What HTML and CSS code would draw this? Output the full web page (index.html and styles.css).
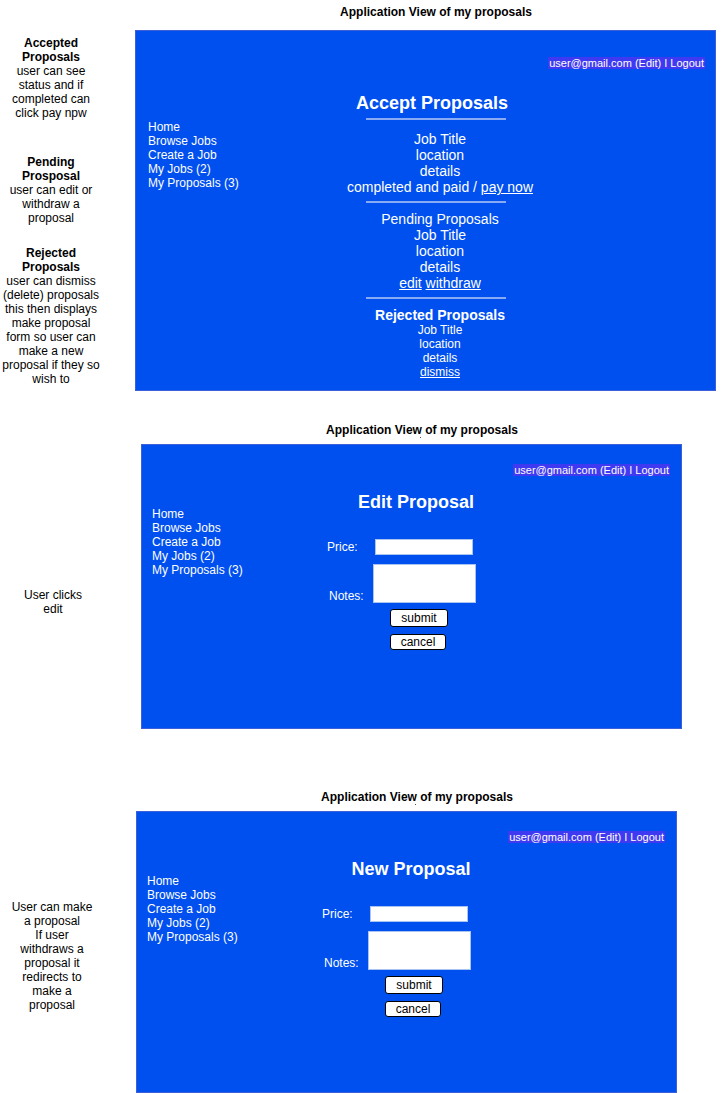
FILE: index.html
```html
<!DOCTYPE html>
<html lang="en">
<head>
<meta charset="utf-8">
<title>Application View of my proposals</title>
<link rel="stylesheet" href="styles.css">
</head>
<body>
<div class="canvas">

  <div class="title title-1">Application View of my proposals</div>
  <div class="title title-2">Application View of my proposals</div>
  <span class="dot dot-2"></span>
  <div class="title title-3">Application View of my proposals</div>
  <span class="dot dot-3"></span>

  <div class="note note-1"><b>Accepted<br>Proposals</b><br>user can see<br>status and if<br>completed can<br>click pay npw</div>
  <div class="note note-2"><b>Pending<br>Prosposal</b><br>user can edit or<br>withdraw a<br>proposal</div>
  <div class="note note-3"><b>Rejected<br>Proposals</b><br>user can dismiss<br>(delete) proposals<br>this then displays<br>make proposal<br>form so user can<br>make a new<br>proposal if they so<br>wish to</div>
  <div class="note note-4">User clicks<br>edit</div>
  <div class="note note-5">User can make<br>a proposal<br>If user<br>withdraws a<br>proposal it<br>redirects to<br>make a<br>proposal</div>

  <section class="panel panel-1">
    <div class="topbar"><span class="email">user@gmail.com (Edit) I Logout</span></div>
    <div class="body">
      <nav class="nav">
        <span>Home</span><span>Browse Jobs</span><span>Create a Job</span><span>My Jobs (2)</span><span>My Proposals (3)</span>
      </nav>
      <div class="main list">
        <h1 class="heading">Accept Proposals</h1>
        <hr class="sep sep-1">
        <div class="block block-a">
          <span>Job Title</span><span>location</span><span>details</span>
          <span>completed and paid / <a href="#">pay now</a></span>
        </div>
        <hr class="sep sep-2">
        <div class="block block-b">
          <span>Pending Proposals</span><span>Job Title</span><span>location</span><span>details</span>
          <span><a href="#">edit</a> <a href="#">withdraw</a></span>
        </div>
        <hr class="sep sep-3">
        <h2 class="subheading">Rejected Proposals</h2>
        <div class="block block-c">
          <span>Job Title</span><span>location</span><span>details</span><span><a href="#">dismiss</a></span>
        </div>
      </div>
    </div>
  </section>

  <section class="panel panel-form panel-2">
    <div class="topbar"><span class="email">user@gmail.com (Edit) I Logout</span></div>
    <div class="body">
      <nav class="nav">
        <span>Home</span><span>Browse Jobs</span><span>Create a Job</span><span>My Jobs (2)</span><span>My Proposals (3)</span>
      </nav>
      <div class="main form">
        <h1 class="heading form-title">Edit Proposal</h1>
        <div class="row row-price"><label class="lbl lbl-price">Price:</label><span class="input"></span></div>
        <div class="row row-notes"><label class="lbl lbl-notes">Notes:</label><span class="textarea"></span></div>
        <button class="btn btn-submit" type="button">submit</button>
        <button class="btn btn-cancel" type="button">cancel</button>
      </div>
    </div>
  </section>

  <section class="panel panel-form panel-3">
    <div class="topbar"><span class="email">user@gmail.com (Edit) I Logout</span></div>
    <div class="body">
      <nav class="nav">
        <span>Home</span><span>Browse Jobs</span><span>Create a Job</span><span>My Jobs (2)</span><span>My Proposals (3)</span>
      </nav>
      <div class="main form">
        <h1 class="heading form-title">New Proposal</h1>
        <div class="row row-price"><label class="lbl lbl-price">Price:</label><span class="input"></span></div>
        <div class="row row-notes"><label class="lbl lbl-notes">Notes:</label><span class="textarea"></span></div>
        <button class="btn btn-submit" type="button">submit</button>
        <button class="btn btn-cancel" type="button">cancel</button>
      </div>
    </div>
  </section>

</div>
</body>
</html>
```

FILE: styles.css
```css
html, body {
  margin: 0;
  padding: 0;
  background: #ffffff;
}

.canvas {
  position: relative;
  width: 726px;
  height: 1093px;
  overflow: hidden;
  background: #ffffff;
  font-family: "Liberation Sans", Arial, Helvetica, sans-serif;
  color: #000000;
}

/* ---------- diagram titles ---------- */
.title {
  position: absolute;
  width: 200px;
  text-align: center;
  font-size: 12px;
  line-height: 14px;
  font-weight: bold;
  white-space: nowrap;
}
.title-1 { left: 336px; top: 5px; }
.title-2 { left: 322px; top: 423px; }
.title-3 { left: 317px; top: 790px; }

.dot {
  position: absolute;
  width: 1px;
  height: 1px;
  background: #555555;
}
.dot-2 { left: 420px; top: 437px; }
.dot-3 { left: 415px; top: 804px; }

/* ---------- annotations ---------- */
.note {
  position: absolute;
  left: 0;
  width: 102px;
  text-align: center;
  font-size: 12px;
  line-height: 14px;
  white-space: nowrap;
}
.note-1 { top: 36px; }
.note-2 { top: 155px; }
.note-3 { top: 246px; }
.note-4 { top: 588px; left: 1px; width: 104px; }
.note-5 { top: 900px; left: 1px; width: 102px; }

/* ---------- app panels ---------- */
.panel {
  position: absolute;
  box-sizing: border-box;
  border: 1px solid #3d60d8;
  background: #0050ef;
  color: #ffffff;
  display: flex;
  flex-direction: column;
}
.panel-1 { left: 135px; top: 30px; width: 581px; height: 361px; }
.panel-2 { left: 141px; top: 444px; width: 541px; height: 285px; }
.panel-3 { left: 136px; top: 811px; width: 541px; height: 282px; }

.topbar {
  display: flex;
  justify-content: flex-end;
}
.panel-1 .topbar { padding: 26px 10px 0 0; }
.panel-form .topbar { padding: 19px 11px 0 0; }

.email {
  display: block;
  padding: 0 1px;
  font-size: 11px;
  line-height: 12px;
  background: #3f3af2;
  color: #ffffff;
  white-space: nowrap;
}

.body {
  display: grid;
}
.body > .nav,
.body > .main {
  grid-area: 1 / 1;
  justify-self: start;
  align-self: start;
}

.nav {
  display: flex;
  flex-direction: column;
  font-size: 12px;
  line-height: 14px;
  white-space: nowrap;
}
.panel-1 .nav { margin: 51px 0 0 12px; }
.panel-form .nav { margin: 31px 0 0 10px; }

.main {
  display: flex;
  flex-direction: column;
}

.heading {
  margin: 0;
  font-size: 18px;
  line-height: 22px;
  font-weight: bold;
  white-space: nowrap;
}

/* ---------- list panel ---------- */
.list {
  width: 240px;
  margin: 23px 0 0 184px;
  text-align: center;
}
.list .heading {
  padding-right: 16px;
}

.sep {
  width: 140px;
  height: 2px;
  border: 0;
  margin: 0 0 0 46px;
  padding: 0;
  background: #8aaaf6;
}
.sep-1 { margin-top: 4px; }
.sep-2 { margin-top: 6px; }
.sep-3 { margin-top: 6px; }

.block {
  display: flex;
  flex-direction: column;
  white-space: nowrap;
}
.block-a { margin-top: 11px; font-size: 14px; line-height: 16px; }
.block-b { margin-top: 8px; font-size: 14px; line-height: 16px; }
.block-c { font-size: 12px; line-height: 14px; }

.subheading {
  margin: 8px 0 0 0;
  font-size: 14px;
  line-height: 16px;
  font-weight: bold;
  white-space: nowrap;
}

.block a {
  color: #ffffff;
  text-decoration: underline;
}

/* ---------- form panels ---------- */
.form {
  margin: 15px 0 0 185px;
  align-items: flex-start;
}
.form-title {
  width: 178px;
  text-align: center;
}

.row {
  display: flex;
}
.row-price {
  margin-top: 26px;
  align-items: center;
}
.row-notes {
  margin-top: 9px;
  align-items: flex-end;
}

.lbl {
  font-size: 12px;
  line-height: 14px;
  white-space: nowrap;
}
.lbl-price { width: 48px; }
.lbl-notes { width: 44px; margin-left: 2px; }

.input,
.textarea {
  display: block;
  box-sizing: border-box;
  background: #ffffff;
  border: 1px solid #a9c3f2;
}
.input { width: 98px; height: 16px; }
.textarea { width: 103px; height: 39px; }

.btn {
  box-sizing: border-box;
  margin: 0 0 0 63px;
  padding: 0;
  background: #ffffff;
  border: 1px solid #000000;
  border-radius: 3px;
  color: #000000;
  font-family: "Liberation Sans", Arial, Helvetica, sans-serif;
  font-size: 12px;
  line-height: 14px;
  text-align: center;
}
.btn-submit { width: 58px; height: 18px; margin-top: 6px; }
.btn-cancel { width: 56px; height: 16px; margin-top: 7px; }
```
